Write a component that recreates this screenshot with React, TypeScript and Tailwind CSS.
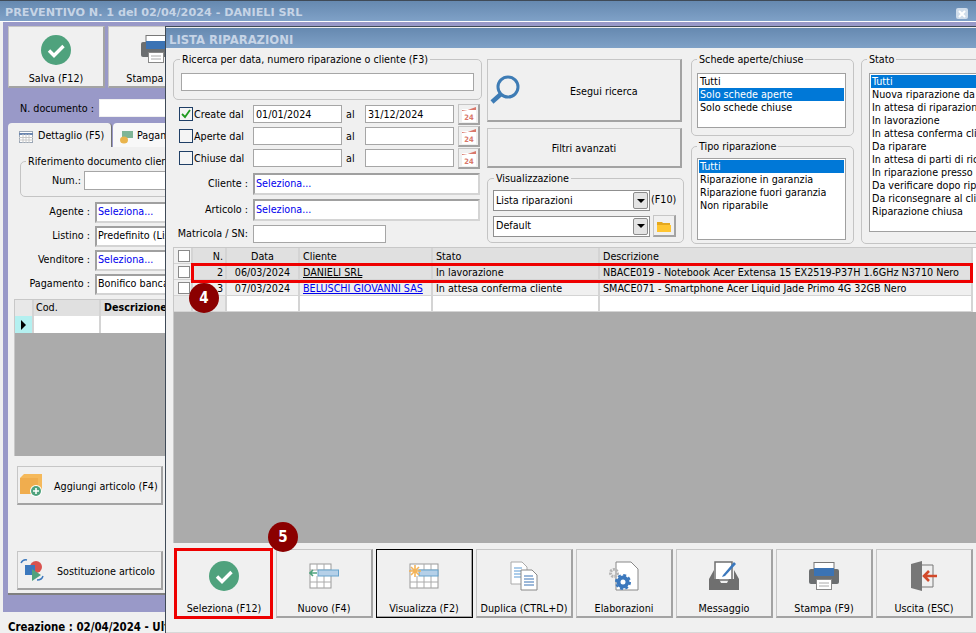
import type { ReactNode } from "react";

const BEVEL =
  "bg-[#f0f0f0] border border-[#c6c6c6] border-r-2 border-b-2 border-r-[#a3a3a3] border-b-[#a3a3a3]";

const CheckIcon = ({ size = 30 }: { size?: number }) => (
  <svg width={size} height={size} viewBox="0 0 30 30">
    <circle cx="15" cy="15" r="15" fill="#4fa27d" />
    <path d="M8 15.5l5 5 9.5-9.5" fill="none" stroke="#fff" strokeWidth="3.4" />
  </svg>
);

const PrinterIcon = () => (
  <svg width="30" height="28" viewBox="0 0 30 28">
    <rect x="5" y="0.5" width="20" height="6" fill="#fff" stroke="#777" />
    <path d="M2 7h26a2 2 0 0 1 2 2v11a2 2 0 0 1-2 2H2a2 2 0 0 1-2-2V9a2 2 0 0 1 2-2z" fill="#6b6e70" />
    <rect x="5" y="6" width="20" height="8" fill="#3b73b4" />
    <rect x="7.5" y="17.5" width="15" height="10" fill="#fff" stroke="#888" />
    <path d="M10 21h10M10 24h10" stroke="#aaa" />
  </svg>
);

const TableArrowIcon = () => (
  <svg width="30" height="26" viewBox="0 0 30 26">
    <rect x="1" y="1" width="21" height="24" fill="#fff" stroke="#999" />
    <path d="M1 7h21M1 19h21M8 1v6M15 1v6M8 13v12M15 13v12" stroke="#aaa" />
    <rect x="9" y="7" width="20.5" height="6" fill="#b5d0e8" stroke="#66a3cc" />
    <path d="M8 10H1M4 7l-3 3 3 3" fill="none" stroke="#4fa27d" strokeWidth="1.6" />
  </svg>
);

const TableStarIcon = () => (
  <svg width="30" height="26" viewBox="0 0 30 26">
    <rect x="1" y="1" width="28" height="24" fill="#fff" stroke="#999" />
    <path d="M1 19h28M8 13v12M15 1v24M22 1v24M1 7h28" stroke="#aaa" />
    <rect x="10" y="7" width="19" height="6" fill="#b5d0e8" stroke="#66a3cc" />
    <path d="M6 2v12M0 8h12M2 4l8 8M10 4l-8 8" stroke="#f3b45a" strokeWidth="1.6" />
  </svg>
);

const DocsIcon = () => (
  <svg width="28" height="30" viewBox="0 0 28 30">
    <path d="M1 1h11l5 5v17H1z" fill="#fff" stroke="#aaa" />
    <path d="M4 7h8M4 10h10M4 13h10M4 16h10" stroke="#5b9bd5" />
    <path d="M11 9h11l5 5v15H11z" fill="#fff" stroke="#888" />
    <path d="M14 15h9M14 18h10M14 21h10M14 24h10" stroke="#3b73b4" />
  </svg>
);

const GearDocIcon = () => (
  <svg width="30" height="30" viewBox="0 0 30 30">
    <path d="M7 1h15l7 7v21H7z" fill="#fff" stroke="#888" />
    <circle cx="5" cy="12" r="3.5" fill="none" stroke="#b5b5b5" strokeWidth="3" strokeDasharray="2 1" />
    <circle cx="14" cy="21" r="4.5" fill="none" stroke="#3b78bd" strokeWidth="4" />
    <circle cx="14" cy="21" r="7" fill="none" stroke="#3b78bd" strokeWidth="2" strokeDasharray="3 2.5" />
  </svg>
);

const InboxIcon = () => (
  <svg width="30" height="29" viewBox="0 0 30 29">
    <path d="M6 1h17v18H6z" fill="#fff" stroke="#6f6f6f" strokeWidth="1.5" />
    <path d="M14 14l11-13 2 2-11 12-3 1z" fill="#3b78bd" />
    <path d="M5 9L0 18v11h30V18l-5-9v9h-5l-2 4h-6l-2-4H5z" fill="#6f6f6f" />
  </svg>
);

const ExitIcon = () => (
  <svg width="28" height="30" viewBox="0 0 28 30">
    <path d="M12 4h11v22H12" fill="none" stroke="#777" />
    <path d="M1 3l11-3v30L1 27z" fill="#777" />
    <path d="M27 15H14M19 10l-5 5 5 5" fill="none" stroke="#d2492a" strokeWidth="2.6" />
  </svg>
);

const SearchIcon = () => (
  <svg width="30" height="30" viewBox="0 0 30 30">
    <circle cx="18" cy="12" r="10" fill="#f0f0f0" stroke="#3e7cb5" strokeWidth="3" />
    <path d="M11 19L2 27" stroke="#3e7cb5" strokeWidth="4.5" />
  </svg>
);

const CalendarBtn = () => (
  <div className={`w-[22px] h-[21px] flex items-center justify-center ${BEVEL}`}>
    <svg width="16" height="16" viewBox="0 0 16 16">
      <rect x="1" y="3" width="14" height="13" fill="#fff" />
      <path d="M1 5q7-1 14-4v3H1z" fill="#d9776a" />
      <text x="8" y="13.5" textAnchor="middle" fontSize="7.5" fontWeight="700" fill="#d9776a">
        24
      </text>
    </svg>
  </div>
);

const ComboArrow = () => (
  <div className="w-[15px] h-[17px] rounded-[2px] border border-[#8c8c8c] bg-[#e4e4e4] flex items-center justify-center">
    <div className="w-0 h-0 border-x-[4px] border-x-transparent border-t-[4px] border-t-black" />
  </div>
);

const Group = ({
  title,
  className,
  legend = "ml-0",
  children,
}: {
  title: string;
  className: string;
  legend?: string;
  children: ReactNode;
}) => (
  <fieldset className={`border border-[#c4c4c4] rounded-[5px] ${className}`}>
    <legend className={`px-[2px] leading-[13px] ${legend}`}>{title}</legend>
    {children}
  </fieldset>
);

const Input = ({ className, value }: { className: string; value?: string }) => (
  <div className={`h-[18px] bg-white border border-[#a6a6a6] px-[2px] leading-[18px] ${className}`}>{value}</div>
);

const Picker = ({ className, value = "Seleziona..." }: { className: string; value?: string }) => (
  <div
    className={`bg-white border-2 border-[#d4d4d4] border-t-[#a0a0a0] border-l-[#a0a0a0] px-[1px] overflow-hidden whitespace-nowrap flex items-center ${
      value === "Seleziona..." ? "text-[#0000ee]" : ""
    } ${className}`}
  >
    {value}
  </div>
);

const DateRow = ({ label, from, to, checked }: { label: string; from?: string; to?: string; checked?: boolean }) => (
  <div className="h-[22px] flex items-center">
    <div className="ml-[6px] w-[14px] h-[14px] bg-[#f4f4f4] border border-[#1f3f66] flex items-center justify-center">
      {checked && (
        <svg width="10" height="10" viewBox="0 0 10 10">
          <path d="M1 5l3 3 5-7" fill="none" stroke="#1f9a1f" strokeWidth="1.8" />
        </svg>
      )}
    </div>
    <span className="ml-[1px] w-[59px] pt-[2px]">{label}</span>
    <Input className="w-[89px]" value={from} />
    <span className="w-[23px] pl-[4px] pt-[2px]">al</span>
    <Input className="w-[89px]" value={to} />
    <div className="ml-[4px]">
      <CalendarBtn />
    </div>
  </div>
);

const ListBox = ({ items, active, className }: { items: string[]; active: number; className: string }) => (
  <div className={`bg-white border border-[#a0a0a0] px-[1px] pt-[1px] overflow-hidden ${className}`}>
    {items.map((item, i) => (
      <div
        key={item}
        className={`h-[13px] leading-[13px] pl-[1px] whitespace-nowrap ${i === active ? "bg-[#0078d7] text-white" : ""}`}
      >
        {item}
      </div>
    ))}
  </div>
);

const Combo = ({ value }: { value: string }) => (
  <div className="w-[157px] h-[21px] bg-white border border-[#8f8f8f] pl-[2px] pr-[1px] flex items-center justify-between">
    <span className="pt-[1px]">{value}</span>
    <ComboArrow />
  </div>
);

const ToolButton = ({
  icon,
  label,
  className,
  marked,
}: {
  icon: ReactNode;
  label: string;
  className?: string;
  marked?: boolean;
}) => (
  <div className={`relative w-[97px] h-[69px] shrink-0 flex flex-col items-center ${BEVEL} ${className ?? ""}`}>
    <div className="h-[51px] flex items-center justify-center">{icon}</div>
    <span className="leading-[13px] mt-[1px] whitespace-nowrap">{label}</span>
    {marked && <div className="absolute -left-[3px] -top-[2px] -right-[2px] -bottom-[3px] border-[3px] border-[#ee0000]" />}
  </div>
);

const ROWS = [
  { n: "2", data: "06/03/2024", cliente: "DANIELI SRL", stato: "In lavorazione", desc: "NBACE019 - Notebook Acer Extensa 15 EX2519-P37H 1.6GHz N3710 Nero", bg: "bg-[#e0e0e0]", link: "text-black" },
  { n: "3", data: "07/03/2024", cliente: "BELUSCHI GIOVANNI SAS", stato: "In attesa conferma cliente", desc: "SMACE071 - Smartphone Acer Liquid Jade Primo 4G 32GB Nero", bg: "bg-[#f0f0f0]", link: "text-[#0000ee]" },
];

const COLS = "grid grid-cols-[19px_34px_73px_133px_167px_373px]";
const CELL = "h-[16px] px-[3px] leading-[17px] border-r-2 border-b border-[#d4d4d4] whitespace-nowrap overflow-hidden";

const Box = () => <div className="w-[12px] h-[12px] bg-white border border-[#8a8a8a] ml-[1px] mt-[2px]" />;

const Grid = () => (
  <div className="flex-1 ml-[7px] bg-[#ababab] border-t border-l border-[#c8c8c8] relative">
    <div className={`${COLS} bg-white`}>
      <div className={`${CELL} px-0 bg-[#f0f0f0] pl-[3px]`}>
        <Box />
      </div>
      <div className={`${CELL} bg-[#e0e0e0] text-right pr-[2px]`}>N.</div>
      <div className={`${CELL} bg-[#e0e0e0] text-center`}>Data</div>
      <div className={`${CELL} bg-[#e0e0e0]`}>Cliente</div>
      <div className={`${CELL} bg-[#e0e0e0]`}>Stato</div>
      <div className={`${CELL} bg-[#e0e0e0]`}>Descrizione</div>
      {ROWS.map((r) => (
        <div key={r.n} className="contents">
          <div className={`${CELL} px-0 bg-[#f0f0f0] pl-[3px]`}>
            <Box />
          </div>
          <div className={`${CELL} ${r.bg} text-right pr-[2px]`}>{r.n}</div>
          <div className={`${CELL} ${r.bg} text-center`}>{r.data}</div>
          <div className={`${CELL} ${r.bg}`}>
            <span className={`underline ${r.link}`}>{r.cliente}</span>
          </div>
          <div className={`${CELL} ${r.bg}`}>{r.stato}</div>
          <div className={`${CELL} ${r.bg}`}>{r.desc}</div>
        </div>
      ))}
      <div className={`${CELL} bg-[#e8e8e8]`} />
      <div className={`${CELL} bg-[#e8e8e8]`} />
      <div className={CELL} />
      <div className={CELL} />
      <div className={CELL} />
      <div className={CELL} />
    </div>
    <div className="absolute left-[17px] top-[15px] w-[782px] h-[20px] border-[3px] border-[#ee0000]" />
    <div className="absolute left-[15px] top-[35px] w-[30px] h-[30px] rounded-full bg-[#8b0000] text-white text-[15px] font-bold flex items-center justify-center">
      4
    </div>
    <div className="absolute left-[94px] bottom-[-9px] w-[30px] h-[30px] rounded-full bg-[#8b0000] text-white text-[15px] font-bold flex items-center justify-center z-10">
      5
    </div>
  </div>
);

const LISTA = () => (
  <div className="absolute left-[165px] top-[26px] w-[811px] h-[607px] flex flex-col bg-[#f0f0f0] border-l border-t border-[#3f4a57] overflow-hidden">
    <div className="h-[20px] shrink-0 bg-gradient-to-b from-[#6689b0] to-[#7fa1c7] pl-[3px] mt-[1px] text-[11.6px] leading-[24px] font-bold font-['DejaVu_Sans',sans-serif] text-[#c6d4e6]">
      LISTA RIPARAZIONI
    </div>
    <div className="flex h-[196px] shrink-0 pl-[7px]">
      <div className="w-[309px] shrink-0 pt-[5px]">
        <Group title="Ricerca per data, numero riparazione o cliente (F3)" className="h-[47px] px-[7px]" legend="-ml-[1px]">
          <Input className="mt-[7px] w-[293px]" />
        </Group>
        <div className="mt-[3px]">
          <DateRow label="Create dal" from="01/01/2024" to="31/12/2024" checked />
          <DateRow label="Aperte dal" />
          <DateRow label="Chiuse dal" />
        </div>
        <div className="mt-[4px] flex flex-col gap-[4px]">
          {["Cliente", "Articolo"].map((l) => (
            <div key={l} className="flex items-center h-[22px]">
              <span className="w-[75px] text-right">{l} :</span>
              <Picker className="ml-[5px] w-[227px] h-[22px]" />
            </div>
          ))}
          <div className="flex items-center h-[18px]">
            <span className="w-[75px] text-right whitespace-nowrap">Matricola / SN:</span>
            <Input className="ml-[5px] w-[133px]" />
          </div>
        </div>
      </div>
      <div className="w-[197px] ml-[5px] shrink-0 pt-[11px]">
        <div className={`w-[195px] h-[63px] flex items-center ${BEVEL}`}>
          <div className="ml-[2px]">
            <SearchIcon />
          </div>
          <span className="ml-[50px] pt-[4px]">Esegui ricerca</span>
        </div>
        <div className={`mt-[6px] w-[195px] h-[40px] flex items-center justify-center pt-[4px] ${BEVEL}`}>Filtri avanzati</div>
        <Group title="Visualizzazione" className="mt-[4px] h-[71px] px-[5px]" legend="ml-[1px]">
          <div className="mt-[5px] flex items-center gap-[1px]">
            <Combo value="Lista riparazioni" />
            <span>(F10)</span>
          </div>
          <div className="mt-[4px] flex items-center gap-[3px]">
            <Combo value="Default" />
            <div className={`w-[23px] h-[22px] flex items-center justify-center ${BEVEL}`}>
              <svg width="16" height="12" viewBox="0 0 16 12">
                <path d="M1 2h5l1 1h7v8H1z" fill="#e5a81e" />
                <path d="M1 5h14v7H1z" fill="#ffc531" />
              </svg>
            </div>
          </div>
        </Group>
      </div>
      <div className="w-[163px] ml-[7px] shrink-0 pt-[5px]">
        <Group title="Schede aperte/chiuse" className="h-[83px] pl-[5px] pr-[7px]">
          <ListBox className="mt-[7px] h-[55px]" active={1} items={["Tutti", "Solo schede aperte", "Solo schede chiuse"]} />
        </Group>
        <Group title="Tipo riparazione" className="mt-[4px] h-[104px] pl-[5px] pr-[7px]">
          <ListBox
            className="mt-[5px] h-[82px]"
            active={0}
            items={["Tutti", "Riparazione in garanzia", "Riparazione fuori garanzia", "Non riparabile"]}
          />
        </Group>
      </div>
      <div className="w-[170px] ml-[7px] shrink-0 pt-[5px]">
        <Group title="Stato" className="h-[191px] pl-[7px] pr-[5px]" legend="-ml-[2px]">
          <ListBox
            className="mt-[7px] h-[159px]"
            active={0}
            items={[
              "Tutti",
              "Nuova riparazione da",
              "In attesa di riparazione",
              "In lavorazione",
              "In attesa conferma cliente",
              "Da riparare",
              "In attesa di parti di ricambio",
              "In riparazione presso",
              "Da verificare dopo riparazione",
              "Da riconsegnare al cliente",
              "Riparazione chiusa",
            ]}
          />
        </Group>
      </div>
    </div>
    <div className="h-[3px] shrink-0" />
    <Grid />
    <div className="h-[90px] shrink-0 pt-[6px] pl-[10px] flex gap-[3px] border-b border-[#d8d8d8]">
      <ToolButton icon={<CheckIcon />} label="Seleziona (F12)" marked />
      <ToolButton icon={<TableArrowIcon />} label="Nuovo (F4)" />
      <ToolButton icon={<TableStarIcon />} label="Visualizza (F2)" className="outline outline-1 -outline-offset-1 outline-black" />
      <ToolButton icon={<DocsIcon />} label="Duplica (CTRL+D)" />
      <ToolButton icon={<GearDocIcon />} label="Elaborazioni" />
      <ToolButton icon={<InboxIcon />} label="Messaggio" />
      <ToolButton icon={<PrinterIcon />} label="Stampa (F9)" />
      <ToolButton icon={<ExitIcon />} label="Uscita (ESC)" />
    </div>
  </div>
);

const SideField = ({ label, value }: { label: string; value?: string }) => (
  <div className="flex items-center h-[20px]">
    <span className="w-[82px] text-right whitespace-nowrap">{label} :</span>
    <Picker className="ml-[5px] w-[72px] h-[21px]" value={value} />
  </div>
);

const Preventivo = () => (
  <div className="h-[633px] flex flex-col bg-[#f0f0f0] border-t border-[#3f4a57]">
    <div className="h-[20px] shrink-0 flex items-center justify-between bg-gradient-to-b from-[#6689b0] to-[#7fa1c7] pl-[5px] pr-[8px] pt-[5px] text-[11.2px] font-bold font-['DejaVu_Sans',sans-serif] text-[#c6d4e6]">
      PREVENTIVO N. 1 del 02/04/2024 - DANIELI SRL
      <div className="w-[12px] h-[11px] bg-[#cfdcea] rounded-[2px] flex items-center justify-center">
        <svg width="8" height="8" viewBox="0 0 8 8">
          <path d="M1 1l6 6M7 1L1 7" stroke="#fff" strokeWidth="2" />
        </svg>
      </div>
    </div>
    <div className="h-[1px] shrink-0 bg-white" />
    <div className="ml-[3px] flex-1 bg-[#9999c8] pl-[5px] pt-[4px]">
      <div className="flex gap-[3px]">
        <div className={`w-[97px] h-[62px] flex flex-col items-center ${BEVEL}`}>
          <div className="mt-[8px]">
            <CheckIcon />
          </div>
          <span className="mt-[7px] leading-[13px]">Salva (F12)</span>
        </div>
        <div className={`w-[97px] h-[62px] flex flex-col items-center ${BEVEL}`}>
          <div className="mt-[8px] h-[30px]">
            <PrinterIcon />
          </div>
          <span className="mt-[7px] leading-[13px]">Stampa (F9)</span>
        </div>
      </div>
      <div className="mt-[11px] flex items-center h-[18px]">
        <span className="ml-[12px] pt-[2px] font-medium">N. documento :</span>
        <Input className="ml-[5px] w-[200px] border-[#f0f0f0]" />
      </div>
      <div className="mt-[6px] flex h-[24px] items-stretch">
        <div className="w-[104px] bg-[#f0f0f0] rounded-t-[4px] flex items-center pl-[11px] pt-[3px] gap-[5px] border-r border-[#707070] whitespace-nowrap">
          <svg width="14" height="12" viewBox="0 0 14 12">
            <rect x="0.5" y="0.5" width="13" height="11" fill="#fff" stroke="#9aa6b5" />
            <path d="M0 3h14" stroke="#6b86b0" strokeWidth="2" />
            <path d="M0 6.5h14M0 9h14M4 3v9M7 3v9M10 3v9" stroke="#c8c8c8" />
          </svg>
          Dettaglio (F5)
        </div>
        <div className="ml-[1px] w-[60px] bg-[#f8f8f8] rounded-t-[4px] flex items-center pl-[6px] pt-[3px] gap-[3px] overflow-hidden whitespace-nowrap">
          <svg width="15" height="14" viewBox="0 0 15 14" className="shrink-0">
            <rect x="3" y="1" width="11" height="7" fill="#7fb596" />
            <ellipse cx="5" cy="10" rx="4" ry="3.5" fill="#e9b44c" />
          </svg>
          Pagamenti
        </div>
      </div>
      <div className="w-[600px] h-[448px] bg-[#f0f0f0] border-b-2 border-[#808080] pt-[8px]">
        <Group title="Riferimento documento cliente" className="ml-[12px] h-[42px] w-[300px]" legend="ml-[5px]">
          <div className="flex items-center mt-[3px]">
            <span className="w-[60px] pt-[1px] text-right">Num.:</span>
            <Input className="ml-[3px] w-[120px] h-[19px] border-[#707070]" />
          </div>
        </Group>
        <div className="mt-[5px] flex flex-col gap-[4px]">
          <SideField label="Agente" />
          <SideField label="Listino" value="Predefinito (Listino)" />
          <SideField label="Venditore" />
          <SideField label="Pagamento" value="Bonifico bancario" />
        </div>
        <div className="mt-[5px] ml-[6px] w-[160px] h-[157px] bg-[#ababab] border-t border-l border-[#c8c8c8]">
          <div className="grid grid-cols-[19px_67px_74px]">
            <div className="h-[16px] bg-[#e8e8e8] border-r-2 border-[#d4d4d4]" />
            <div className="h-[16px] pl-[2px] leading-[16px] bg-[#e0e0e0] border-r-2 border-[#d4d4d4]">Cod.</div>
            <div className="h-[16px] pl-[3px] leading-[16px] bg-[#e0e0e0] font-bold whitespace-nowrap overflow-hidden">Descrizione</div>
            <div className="h-[17px] bg-[#b4f0f0] flex items-center justify-center border-r-2 border-[#d4d4d4]">
              <div className="w-0 h-0 border-y-[5px] border-y-transparent border-l-[5px] border-l-black" />
            </div>
            <div className="h-[17px] bg-white border-r-2 border-[#d4d4d4]" />
            <div className="h-[17px] bg-white" />
          </div>
        </div>
        <div className={`ml-[9px] mt-[10px] w-[146px] h-[39px] flex items-center ${BEVEL}`}>
          <svg width="23" height="23" viewBox="0 0 23 23" className="ml-[2px]">
            <path d="M0 4l4-4h18v17H0z" fill="#f5b95b" />
            <path d="M0 4h18v16H0zM18 4l4-4" fill="#f0ad4e" />
            <circle cx="16" cy="17" r="6" fill="#fff" />
            <circle cx="16" cy="17" r="5" fill="#4fa27d" />
            <path d="M16 14v6M13 17h6" stroke="#fff" strokeWidth="1.6" />
          </svg>
          <span className="ml-[11px] pt-[5px] whitespace-nowrap">Aggiungi articolo (F4)</span>
        </div>
        <div className={`ml-[9px] mt-[46px] w-[146px] h-[39px] flex items-center ${BEVEL}`}>
          <svg width="24" height="24" viewBox="0 0 24 24" className="ml-[2px]">
            <circle cx="16" cy="9" r="6" fill="#d9534f" />
            <rect x="5" y="7" width="10" height="10" fill="#3b78bd" />
            <path d="M12 11l9 6-9 6z" fill="#4fa27d" />
            <path d="M1 5q2-4 6-3M23 18q-1 4-6 4" fill="none" stroke="#3b78bd" strokeWidth="1.4" />
          </svg>
          <span className="ml-[13px] pt-[5px] whitespace-nowrap">Sostituzione articolo</span>
        </div>
      </div>
    </div>
    <div className="h-[21px] shrink-0 pl-[8px] pt-[8px] leading-[14px] font-bold text-[11.4px] whitespace-nowrap">
      Creazione : 02/04/2024 - Ultima modifica
    </div>
  </div>
);

const App = () => (
  <div className="relative w-[976px] h-[633px] overflow-hidden text-[10.7px] text-black font-['DejaVu_Sans_Condensed','Noto_Sans',sans-serif]">
    <Preventivo />
    <LISTA />
  </div>
);

export default App;
